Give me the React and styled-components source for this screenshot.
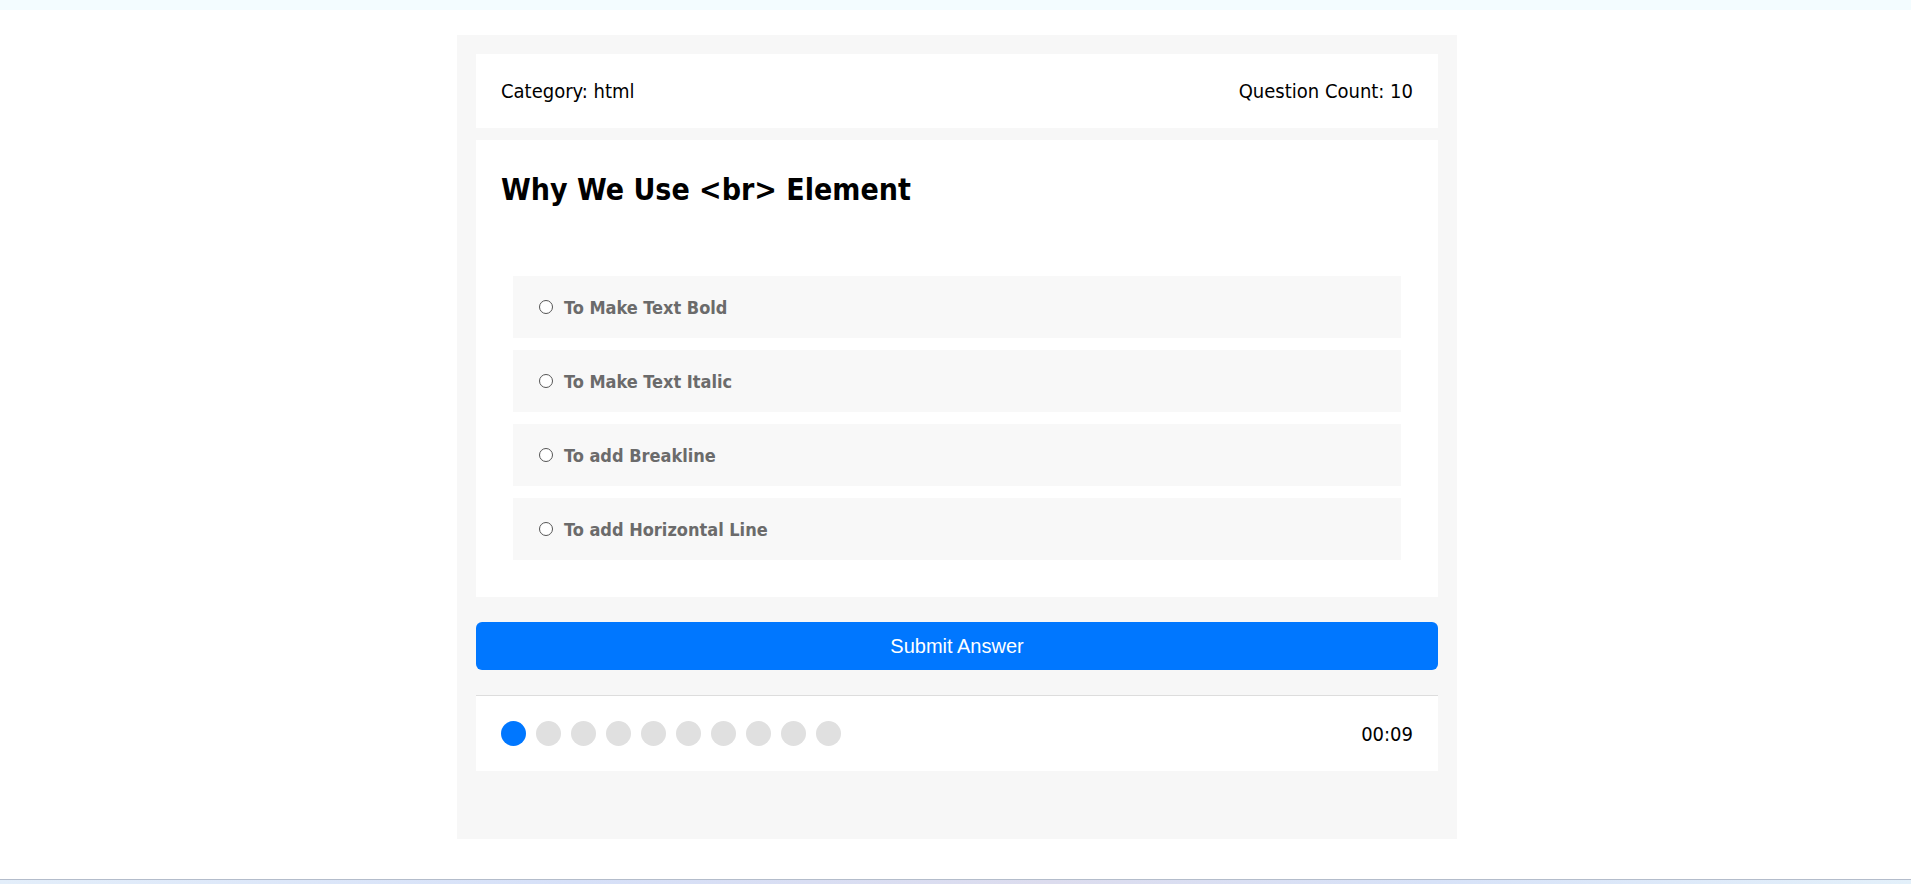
import React from "react";
import styled, { createGlobalStyle } from "styled-components";

const GlobalStyle = createGlobalStyle`
  html, body { margin: 0; padding: 0; background: #ffffff; }
  body { font-family: "DejaVu Sans Condensed", "DejaVu Sans", sans-serif; }
  * { box-sizing: border-box; }
`;

const Page = styled.div`
  min-height: 100vh;
  display: flex;
  flex-direction: column;
`;

const TopStrip = styled.div`
  height: 10px;
  background: #f3fcff;
  flex: none;
`;

const Main = styled.main`
  flex: 1;
  padding: 25px 0 0 3px;
`;

const BottomStrip = styled.div`
  height: 5px;
  flex: none;
  border-top: 1px solid #b3bccb;
  background: linear-gradient(90deg, #e3eefa 0%, #d6e0f8 30%, #dcdcee 55%, #d7e2f8 75%, #e3f0fa 100%);
`;

const Quiz = styled.div`
  width: 1000px;
  margin: 0 auto;
  background: #f7f7f7;
  padding: 19px 19px 68px;
  display: flex;
  flex-direction: column;
`;

const Header = styled.div`
  background: #ffffff;
  padding: 25px;
  display: flex;
  justify-content: space-between;
  align-items: center;
  font-size: 20px;
  line-height: 24px;
  color: #000;
`;

const QuestionCard = styled.div`
  background: #ffffff;
  margin-top: 12px;
  padding: 25px;
`;

const Title = styled.h2`
  margin: 7px 0 69px;
  font-size: 30px;
  line-height: 35px;
  font-weight: bold;
  color: #000;
`;

const Options = styled.div`
  display: flex;
  flex-direction: column;
  gap: 12px;
  margin: 0 12px 12px;
`;

const Option = styled.label`
  display: flex;
  align-items: center;
  background: #f8f8f8;
  padding: 20px 25px;
  height: 62px;
  font-size: 18px;
  font-weight: bold;
  color: #6b6b6b;
  cursor: pointer;
`;

const Radio = styled.input.attrs({ type: "radio" })`
  appearance: none;
  width: 14px;
  height: 14px;
  margin: 0 11px 0 1px;
  border: 1.3px solid #555555;
  border-radius: 50%;
  background: #fff;
  flex: none;
`;

const SubmitButton = styled.button`
  margin-top: 25px;
  height: 48px;
  border: none;
  border-radius: 6px;
  background: #0077ff;
  color: #ffffff;
  font-family: "Liberation Sans", Arial, sans-serif;
  font-size: 20px;
  cursor: pointer;
`;

const Footer = styled.div`
  margin-top: 25px;
  border-top: 1px solid #dddddd;
  background: #ffffff;
  padding: 25px;
  display: flex;
  justify-content: space-between;
  align-items: center;
`;

const Dots = styled.div`
  display: flex;
  gap: 10px;
`;

const Dot = styled.span`
  width: 25px;
  height: 25px;
  border-radius: 50%;
  background: ${(p) => (p.$active ? "#0077ff" : "#e0e0e0")};
`;

const Timer = styled.span`
  font-size: 20px;
  line-height: 24px;
  color: #000;
`;

const options = [
  "To Make Text Bold",
  "To Make Text Italic",
  "To add Breakline",
  "To add Horizontal Line",
];

export default function App() {
  return (
    <>
      <GlobalStyle />
      <Page>
        <TopStrip />
        <Main>
          <Quiz>
            <Header>
              <span>Category: html</span>
              <span>Question Count: 10</span>
            </Header>
            <QuestionCard>
              <Title>Why We Use &lt;br&gt; Element</Title>
              <Options>
                {options.map((o) => (
                  <Option key={o}>
                    <Radio name="answer" />
                    {o}
                  </Option>
                ))}
              </Options>
            </QuestionCard>
            <SubmitButton>Submit Answer</SubmitButton>
            <Footer>
              <Dots>
                {Array.from({ length: 10 }).map((_, i) => (
                  <Dot key={i} $active={i === 0} />
                ))}
              </Dots>
              <Timer>00:09</Timer>
            </Footer>
          </Quiz>
        </Main>
        <BottomStrip />
      </Page>
    </>
  );
}
